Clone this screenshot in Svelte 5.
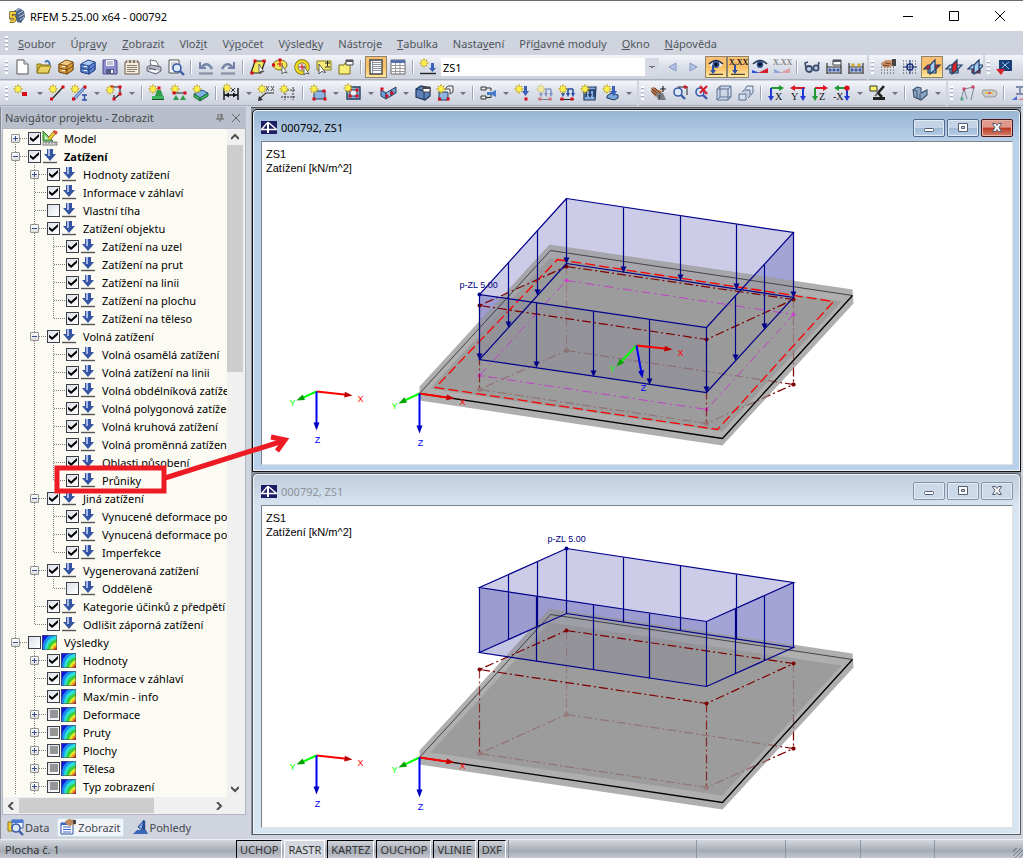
<script lang="ts">
  type Check = 'on' | 'off' | 'mixed'
  type Node = { depth: number; label: string; icon: string; check: Check; exp?: '+' | '-' }
  type Pt = [number, number]

  const menus: [string, string, string][] = [
    ['', 'S', 'oubor'], ['Úpr', 'a', 'vy'], ['', 'Z', 'obrazit'], ['Vlož', 'i', 't'],
    ['Vý', 'p', 'očet'], ['Výsled', 'k', 'y'], ['Nástro', 'j', 'e'], ['', 'T', 'abulka'],
    ['Nasta', 'v', 'ení'], ['Pří', 'd', 'avné moduly'], ['', 'O', 'kno'], ['', 'N', 'ápověda']
  ]

  // "|" separator, "v" drop-down arrow, "!" prefix for a pressed button
  const fileTools = 'new open box1 box2 save clip print preview | undo redo | para lasso ring pick folder | !list table | load'.split(' ')
  const viewTools = 'prev next !eyeload !xload eye xx | glasses rail1 rail2'.split(' ')
  const gridTools = ['hand', 'grid', '!plane1', 'plane2', 'plane3']
  const drawTools = 'node v line member v poly v | support line2 slab | dim v xxdim frame | rect v opening v fold v solid setbox v | joint v load1 load2 load3 load4 load5 v'.split(' ')
  const zoomTools = 'move zoomin zoomout cube cubes | axX axY axZ axMX v lamp v | view v'.split(' ')

  const navTabs = [
    { label: 'Data', icon: 'tabdata' },
    { label: 'Zobrazit', icon: 'tabview' },
    { label: 'Pohledy', icon: 'tabcam' }
  ]
  let activeTab = $state('Zobrazit')

  const statusModes = ['UCHOP', 'RASTR', 'KARTEZ', 'OUCHOP', 'VLINIE', 'DXF']
  let modes = $state(new Set(['RASTR']))

  function toggleMode(m: string) {
    const next = new Set(modes)
    if (next.has(m)) next.delete(m)
    else next.add(m)
    modes = next
  }

  const n = (depth: number, label: string, icon = 'arrow', check: Check = 'on', exp?: '+' | '-'): Node =>
    ({ depth, label, icon, check, exp })

  const tree: Node[] = [
    n(0, 'Model', 'model', 'on', '+'),
    n(0, 'Zatížení', 'arrow', 'on', '-'),
    n(1, 'Hodnoty zatížení', 'arrow', 'on', '+'),
    n(1, 'Informace v záhlaví'),
    n(1, 'Vlastní tíha', 'arrow', 'off'),
    n(1, 'Zatížení objektu', 'arrow', 'on', '-'),
    n(2, 'Zatížení na uzel'),
    n(2, 'Zatížení na prut'),
    n(2, 'Zatížení na linii'),
    n(2, 'Zatížení na plochu'),
    n(2, 'Zatížení na těleso'),
    n(1, 'Volná zatížení', 'arrow', 'on', '-'),
    n(2, 'Volná osamělá zatížení'),
    n(2, 'Volná zatížení na linii'),
    n(2, 'Volná obdélníková zatížení'),
    n(2, 'Volná polygonová zatížení'),
    n(2, 'Volná kruhová zatížení'),
    n(2, 'Volná proměnná zatížení'),
    n(2, 'Oblasti působení'),
    n(2, 'Průniky'),
    n(1, 'Jiná zatížení', 'arrow', 'on', '-'),
    n(2, 'Vynucené deformace podpor'),
    n(2, 'Vynucená deformace podpor'),
    n(2, 'Imperfekce'),
    n(1, 'Vygenerovaná zatížení', 'arrow', 'on', '-'),
    n(2, 'Odděleně', 'arrow', 'off'),
    n(1, 'Kategorie účinků z předpětí'),
    n(1, 'Odlišit záporná zatížení'),
    n(0, 'Výsledky', 'result', 'off', '-'),
    n(1, 'Hodnoty', 'result', 'on', '+'),
    n(1, 'Informace v záhlaví', 'result'),
    n(1, 'Max/min - info', 'result'),
    n(1, 'Deformace', 'result', 'mixed', '+'),
    n(1, 'Pruty', 'result', 'mixed', '+'),
    n(1, 'Plochy', 'result', 'mixed', '+'),
    n(1, 'Tělesa', 'result', 'mixed', '+'),
    n(1, 'Typ zobrazení', 'result', 'mixed', '+')
  ]

  // does the branch at this level go on below row i
  function goesOn(i: number, level: number) {
    for (let j = i + 1; j < tree.length; j++) {
      if (tree[j].depth === level) return true
      if (tree[j].depth < level) return false
    }
    return level < 2
  }

  const p = (d: string, stroke = '#333', w = 1, fill = 'none') =>
    `<path d="${d}" stroke="${stroke}" stroke-width="${w}" fill="${fill}"/>`
  const f = (d: string, fill: string) => `<path d="${d}" fill="${fill}"/>`
  const dot = (x: number, y: number, c = '#d80c18') => `<rect x="${x - 1.5}" y="${y - 1.5}" width="3" height="3" fill="${c}"/>`
  const star = (x = 4, y = 4) =>
    `<g transform="translate(${x} ${y})">` + p('M0-4.500V4.500M-4.500 0H4.500M-3-3L3 3M3-3L-3 3', '#c4ac28', 1.6) +
    p('M0-3V3M-3 0H3M-2-2L2 2M2-2L-2 2', '#fff24a', 1.2) + '</g>'
  const eyeShape = f('M1 6Q8-1 15 6Q8 12 1 6z', '#e8eef8') + p('M1 5Q8-2 15 5', '#23304f', 1.6) +
    '<circle cx="8" cy="5.5" r="3.4" fill="#2b4c8c"/><circle cx="8" cy="5.5" r="1.4" fill="#000"/>'
  const magn = (x: number, y: number) =>
    `<circle cx="${x}" cy="${y}" r="4" fill="#dbe8f8" stroke="#3c5ba9" stroke-width="1.6"/>` + p(`M${x + 3} ${y + 3}l4 4`, '#3c5ba9', 2.4)
  const down = (x: number, y: number) => f(`M${x - 1} ${y}h2v5h2l-3 4l-3-4h2z`, '#2b4fa8')
  const sup = f('M1 15h14v-1h-14z', '#222') + dot(3, 14) + dot(13, 14)
  const plane = (red: number) =>
    p('M4 7h8v7H4z', '#1f3d66', 1.2, red === 2 ? '#e02424' : '#8fc0ea') +
    p('M0 10L4 6H16L12 10z', '#1f3d66', 1.2, red === 0 ? '#e02424' : '#a7cdf0') +
    p('M6 6L11 1V11L6 15z', '#1f3d66', 1.2, red === 1 ? '#e02424' : '#a7cdf0')
  const axis = (letter: string, h: string, v: string, flip = false) =>
    p(flip ? 'M15 3H4' : 'M3 3H12', h, 2) + f(flip ? 'M5 0L0 3L5 6z' : 'M11 0l5 3l-5 3z', h) +
    p(flip ? 'M13 3V12' : 'M3 3V12', v, 2) + f(flip ? 'M10 11h6l-3 5z' : 'M0 11h6l-3 5z', v) +
    `<text x="${flip ? 1 : 7}" y="15" font-size="10" font-family="Liberation Serif" fill="#111">${letter}</text>`
  const xxText = (c: string) => `<text x="-1" y="6" font-size="8" font-weight="bold" font-family="Liberation Serif" fill="${c}">X.XX</text>`
  const cabinet = (a: string, b: string, c: string) =>
    p('M1 5L8 1L15 3V11L9 15L1 13z', c, 1, a) + p('M1 5L9 7V15L1 13z', c, 1, b) + p('M9 7l6-4v8l-6 4z', c, 1, b) +
    p('M1 9l8 2l6-4', c) + f('M4 7h3v1h-3zM4 11h3v1h-3z', '#fff')

  const icons: Record<string, string> = {
    new: p('M3 1h7l4 4v10H3z', '#555', 1, '#fff') + p('M10 1v4h4', '#777', 1, '#dde'),
    open: p('M1 14V5h4l1 1h7v8z', '#8a7616', 1, '#d8b93a') + p('M1 14l3-7h11l-3 7z', '#8a7616', 1, '#e8d264') + p('M9 3q4-3 5 3', '#3d6fa8', 1.8),
    box1: cabinet('#f4ca80', '#d99a3a', '#75501a'),
    box2: cabinet('#a9c6f4', '#5f86d0', '#27448a'),
    save: p('M1 1h13l1 1v13H1z', '#4d4d88', 1, '#8d8fd0') + f('M4 1h8v6H4z', '#f2f2fa') + f('M4 10h8v5H4z', '#555b88') + f('M9 11h2v3H9z', '#fff') + p('M5 3h6M5 5h6', '#99a'),
    clip: p('M1 3h14v12H1z', '#6b5d48', 1, '#f4ecdc') + f('M2 1h12v3H2z', '#8a7a60') + p('M4 1v3M8 1v3M12 1v3', '#eee', 1.4) + p('M3 6.500h10M3 8.500h10M3 10.500h10M3 12.500h8', '#8a8070'),
    print: p('M4 1l6 1l3 5H5z', '#777', 1, '#fff') + p('M1 8l4-2l10 2v4l-5 3l-9-3z', '#667', 1, '#b9bcc8') + f('M3 12l7 2l3-2l-7-2z', '#fff') + p('M3 9l7 2', '#446'),
    preview: p('M1 1h10v13H1z', '#555', 1, '#fff') + p('M3 4h6M3 6h6M3 8h4M3 10h3', '#99a') + magn(9, 9),
    undo: p('M2 3v6h6', '#7384a8', 2) + p('M3 9Q9 1 14 10', '#7384a8', 2.6) + p('M1 14.500h14', '#8d96a8', 2.4),
    redo: p('M14 3v6h-6', '#7384a8', 2) + p('M13 9Q7 1 2 10', '#7384a8', 2.6) + p('M1 14.500h14', '#8d96a8', 2.4),
    para: p('M5 2H15L11 14H1z', '#222', 1.2, '#f4e95a') + dot(5, 2) + dot(14, 2) + dot(2, 14) + p('M9 5v9l2-2l3 1z', '#444', 0.8, '#fff'),
    lasso: '<ellipse cx="8" cy="6" rx="7" ry="5" fill="#f4e95a" stroke="#7a6d12"/>' + p('M5 5h6M8 2v6', '#d80c18') + dot(8, 1) + dot(1.5, 6) + p('M10 6v9l2-2l3 1z', '#444', 0.8, '#fff'),
    ring: '<circle cx="8" cy="8" r="5.7" stroke="#6b5f0a" stroke-width="4" fill="none"/><circle cx="8" cy="8" r="5.7" stroke="#f0dc20" stroke-width="2.6" fill="none"/>' + p('M8 5v6M5 8h6', '#d80c18') + p('M10 7v9l2-2l3 1z', '#444', 0.8, '#fff'),
    pick: p('M1 2h14v9H1z', '#8a7d1a', 1, '#f7ee78') + p('M9 4h5M11.5 2v5M9 8h5', '#222') + p('M3 5v10l2.500-2.500l4 1z', '#333', 0.8, '#fff'),
    folder: p('M1 6h5l1-2h5v11H1z', '#7d7018', 1, '#f7ee78') + p('M8 1h7v5H8z', '#444', 1, '#fff') + f('M8 1h7v2H8z', '#556'),
    list: p('M2 1h12v14H2z', '#444', 1.4, '#fff') + p('M5 3.500h8M5 5.500h8M5 7.500h8M5 9.500h8M5 11.500h8M4.500 2v12', '#6a7488', 0.8),
    table: p('M1 1h14v14H1z', '#666', 1, '#fff') + f('M1 1h14v3H1z', '#5472b0') + p('M1 6.500h14M1 9.500h14M1 12.500h14M5.500 4v11M10 4v11', '#999'),
    load: star(4, 4) + f('M11 4h3v5h2l-3.500 4l-3.500-4h2z', '#3b60b8') + p('M0 14.500h16', '#222', 1.4),
    prev: p('M12 4L5 8L12 12z', '#8396c4', 1, '#b4c3e6'),
    next: p('M4 4L11 8L4 12z', '#8396c4', 1, '#b4c3e6'),
    eyeload: eyeShape + down(5, 6) + p('M1 15.300h14', '#222'),
    xload: xxText('#222') + down(5, 6) + p('M1 15.300h14', '#222'),
    eye: eyeShape + f('M0 14V11L8 14z', '#2b4fd8') + f('M6 14h10V9z', '#d02030'),
    xx: xxText('#888') + f('M0 14V10L8 14z', '#92a4de') + f('M6 14h10V9z', '#dda0a4'),
    glasses: '<circle cx="5" cy="10" r="3" fill="#c3d2e8" stroke="#3b4c70" stroke-width="1.800"/><circle cx="12" cy="9" r="2.6" fill="#c3d2e8" stroke="#3b4c70" stroke-width="1.800"/>' + p('M2 9L1 4L4 3M14 8l1-5', '#3b4c70', 1.6),
    rail1: p('M1 15V4M15 15V6M1 8h14M1 14h14', '#333', 1.2) + dot(4, 11, '#3858a8') + dot(8, 11, '#3858a8') + dot(12, 11, '#3858a8') + p('M7 1h8v5H7z', '#444', 1, '#fff') + f('M7 1h8v2H7z', '#556'),
    rail2: p('M1 15V4M15 15V4M1 8h14M1 14h14', '#333', 1.2) + dot(5, 6, '#c9a62a') + dot(11, 6, '#c9a62a') + dot(4, 11, '#3858a8') + dot(8, 11, '#3858a8') + dot(12, 11, '#3858a8'),
    hand: p('M1 5h15M1 8h15M1 11h15M1 14h15', '#444', 1.2).replace('/>', ' stroke-dasharray="1 2"/>') + f('M1 4L6 1L13 1V7L7 9L3 8z', '#c9926a') + p('M3 6l6 1M5 4l6 1', '#6b3f22') + f('M12 0h4v7h-4z', '#444'),
    grid: p('M1 2h15M1 5h15M1 8h15M1 11h15M1 14h15', '#444', 1).replace('/>', ' stroke-dasharray="1 2"/>') + '<circle cx="8" cy="8" r="3" fill="#e8ecf6" stroke="#1c2f7c" stroke-width="1.4"/>' + p('M8 1v14M1 8h14', '#1c2f7c'),
    plane1: plane(0), plane2: plane(1), plane3: plane(2),
    nn: f('M3 1h13v11H3z', '#1d3f78') + p('M6 3l3 3l4-3M6 9l3-3l4 4', '#8ecbf0') + f('M0 10h9l-4 6z', '#d8202a'),
    node: star(4, 4) + '<rect x="8" y="7" width="5" height="4" fill="#d80c18"/>',
    line: p('M3 14L14 2', '#222', 1.2) + dot(2.5, 14) + dot(14, 2) + star(4, 4),
    member: p('M3 14L14 2', '#3a62ad', 3) + p('M3 14L14 2', '#a9c6ee', 1.2) + dot(2.5, 14) + dot(14, 2) + star(4, 4) + p('M11 10h5M13.500 10v5M11 15h5', '#2b4fa8', 1.4),
    poly: p('M6 2H14V9L8 14V10', '#222', 1.2) + dot(6, 2) + dot(14, 2) + dot(14, 9) + dot(8, 14) + star(4, 5),
    support: star(4, 4) + dot(10, 3) + f('M8 5h4l2 6H6z', '#2f9c4c') + f('M3 11h12v3H3z', '#3fb45e') + p('M3 14.500h12', '#164f26', 1),
    line2: star(4, 4) + p('M3 8h12', '#222') + dot(3, 8) + dot(14, 8) + f('M2 15l3-5l3 5zM9 15l3-5l3 5z', '#2f9c4c'),
    slab: p('M1 9l8-4l6 3l-8 5z', '#2b4f80', 1, '#7db1e6') + p('M1 9v3l6 4v-3zM7 13v3l8-5V8z', '#1d6b38', 1, '#48b866') + star(4, 4),
    dim: p('M1 3v12M15 3v12M1 10h14', '#111', 1.4) + f('M2 10l4-2.500v5zM14 10l-4-2.500v5z', '#111') + p('M8 3l4 4M12 3l-4 4', '#333') + star(4, 3),
    xxdim: p('M1 14L8 8H16', '#333', 1.1) + f('M0 16l1-5l4 4z', '#333') + p('M8 1l3 5M11 1l-3 5M13 1l3 5M16 1l-3 5', '#444', 0.9) + star(4, 4),
    frame: p('M5 2v13M13 2v13M1 5h15M1 12h15', '#333', 1).replace('/>', ' stroke-dasharray="2 1"/>') + star(4, 4),
    rect: p('M4 6h11v8H4z', '#23405f', 1, '#8db4e0') + dot(15, 14) + dot(4, 14) + dot(14, 6) + star(4, 4),
    opening: p('M2 2h13v12H2z', '#23405f', 1.4, '#8db4e0') + p('M5 5h7v6H5z', '#23405f', 1, '#eef2f8') + dot(5, 5) + dot(12, 5) + dot(5, 11) + dot(12, 11) + star(3, 3),
    fold: p('M1 5l5 3v6l-5-3z', '#23405f', 1, '#6fa0d8') + p('M6 8l5-3v6l-5 3z', '#23405f', 1, '#9cc3ee') + p('M11 5l5-3v6l-5 3z', '#23405f', 1, '#6fa0d8') + dot(7, 11) + dot(12, 8) + dot(2, 4),
    solid: p('M1 4l5-3l9 2v8l-5 4l-9-3z', '#20355a', 1.2, '#5d83b8') + p('M1 4l8 2v9', '#20355a') + p('M8 2h7v5H8z', '#444', 1, '#fff') + f('M8 2h7v2H8z', '#445'),
    setbox: p('M2 7h9v8H2z', '#23405f', 1, '#8db4e0') + p('M8 4l3-3h5v6l-3 2M8 4h5v5', '#444', 1, '#f0f2f6') + dot(2.5, 14) + dot(11, 14) + star(4, 4),
    joint: p('M1 2h5v3H1zM1 11h5v3H1z', '#333', 1, '#e8eaf0') + p('M6 3h5v3M6 12.500h5v-3', '#333') + f('M7 7h5l4-2v7l-4-2H7z', '#4a7cc8'),
    load1: star(4, 4) + f('M9 1h3v5h2l-3.500 5L7 6h2z', '#3b60b8') + dot(11, 14),
    load2: `<g opacity=".5">${p('M4 4h10M4 4v5M9 4v5M14 4v5', '#2b4fa8', 1.6)}${f('M2 8h4l-2 4zM7 8h4l-2 4zM12 8h4l-2 4z', '#2b4fa8')}${sup}${star(4, 4)}</g>`,
    load3: p('M4 4h10M4 4v5M9 4v5M14 4v5', '#2b4fa8', 1.6) + f('M2 8h4l-2 4zM7 8h4l-2 4zM12 8h4l-2 4z', '#2b4fa8') + sup + star(4, 4),
    load4: p('M3 2h12l-1 13H3z', '#20355a', 1.2, '#86b2e4') + p('M3 5h11M5 5v7M9 5v6M13 5v7', '#20355a', 1.6) + f('M7 9h4l-2 4z', '#20355a') + star(4, 4),
    load5: p('M4 11l4-3l7 2v3l-4 2l-7-2z', '#20355a', 1, '#7ba6dc') + f('M9 1h3v5h2l-3.500 5L7 6h2z', '#3b60b8') + star(4, 4),
    move: f('M1 3l3-1l4 3l4 1l-1 4l-5 2l-4-4z', '#b57a55') + p('M2 4l6 5M5 3l5 5M1 6l5 4', '#5d3216') + p('M13 1v6M10 4h6', '#222', 1.2) + f('M6 8h7l3 7H8z', '#777b84') + p('M10 10l-1 4', '#333'),
    zoomin: magn(6, 7) + p('M6 2h9v8', '#222') + p('M13 0v4M11 2h5', '#d80c18', 1.2),
    zoomout: magn(6, 7) + p('M6 1l7 8M13 1L6 8', '#d82030', 2.2),
    cube: p('M1 4l3-3h11v11l-3 3H1z', '#5d708f', 1, '#ccd8e8') + p('M1 4h11v11M12 4l3-3M4 1v11h11M4 12l-3 3', '#5d708f'),
    cubes: p('M7 4l2-3h6v6l-2 3', '#5d708f', 1, '#dbe4f0') + p('M4 7l2-2h6v6l-2 2', '#5d708f', 1, '#c3d0e4') + p('M1 9h7v6H1z', '#5d708f', 1, '#d4deec'),
    axX: axis('X', '#1f9a34', '#2438d0'),
    axY: axis('Y', '#d81828', '#2438d0', true),
    axZ: axis('Z', '#d81828', '#1f9a34'),
    axMX: p('M14 3H4', '#1f9a34', 2) + f('M5 0L0 3L5 6z', '#1f9a34') + p('M13 3V12', '#2438d0', 2) + f('M10 11h6l-3 5z', '#2438d0') + '<circle cx="13" cy="3" r="2.600" fill="#d80c18"/><text x="-1" y="15" font-size="10" font-family="Liberation Serif" fill="#111">-X</text>',
    lamp: p('M1 1h7v5H1z', '#333', 1, '#fff766') + p('M15 1L9 8L13 12', '#222', 2.6) + f('M4 12h12v3H4z', '#222') + p('M9 8l-3 3', '#555', 1.4),
    view: p('M1 5l4-3l4 1v5l6-3v5l-6 5l-7-3z', '#3d5470', 1.1, '#8ba4c4') + p('M1 5l4 1v7M8 9v6', '#3d5470'),
    frameview: p('M2 15L5 4L15 2L12 15M5 4l3 10', '#7d8795') + dot(5, 4, '#c46') + dot(14, 2, '#c46') + dot(3, 14, '#5a8'),
    cylinder: p('M2 5h10q4 0 4 3.500t-4 3.500H4L1 8z', '#999', 1, '#ccc') + f('M4 7h8v2H4z', '#e8c84a') + f('M7 7h3v2H7z', '#d66'),
    ibeam: p('M5 2h8M9 2v7M5 9h8', '#7f8cae', 1.8) + f('M1 15l5-4v4z', '#4a68d8') + f('M6 15h8v-3z', '#dd8890'),
    arrow: f('M5 1h6v5h3L8 13L2 6h3z', '#3554a2') + f('M6 1h2v7H6z', '#a9bbe6') + p('M1 14.500h14', '#555', 1.4),
    model: p('M1 1v10h10z', '#2c7a2c', 1, '#7ad06c') + f('M3 6v3h3z', '#fff') + p('M7 9l6-7', '#8a6a10', 3.600) + p('M7 9l6-7', '#f6cf3c', 2.200) + f('M12 0l4 2l-2 3l-3-3z', '#d04848') + p('M1 12h14v3H1z', '#777', 1, '#eee') + p('M4 12v2M7 12v2M10 12v2M13 12v2', '#777'),
    result: f('M0 1h15v15H0z', '#1418d8') + f('M1 16Q0 5 8 1H15V16z', '#1c8cf0') + f('M3 16Q3 5 13 2H15V16z', '#2be0d8') + f('M5 16Q6 7 15 5V16z', '#3ad03c') + f('M8 16Q9 10 15 8V16z', '#e8e828') + f('M10 16Q11 12 15 11V16z', '#f09020') + f('M12 16q1-2 3-3V16z', '#e01818') + p('M.5 1.500h14v14H.5z', '#555', 0.6),
    tabdata: p('M1 3h5v9H1z', '#8a7616', 1, '#f2ce3c') + p('M5 1h11v8H5z', '#3b63b8', 1, '#fff') + f('M5 1h11v3H5z', '#4a7ad8') + magn(9, 9),
    tabview: p('M1 4h12v11H1z', '#2b4f9a', 1, '#fff') + f('M1 4h12v2H1z', '#3566c8') + p('M3 8h8M3 10.500h8M3 13h8', '#3566c8', 1.2) + f('M5 2l4-2l7 1v4L9 7L6 5z', '#c08a5e') + f('M13 1h3v4h-3z', '#444'),
    tabcam: p('M12 1L6 8l4 3z', '#24478e', 1, '#7fa4e0') + p('M12 2v9', '#24478e', 2.400) + f('M1 15l4-4h9l2 4z', '#3c66b8')
  }

  // load block corners: back left, back right, front right, front left
  const loadBody: Pt[] = [[567, 199], [794, 233], [707, 328], [480, 295]]
  const loadFlat: Pt[] = [[567, 185], [794, 219], [707, 258], [480, 224]]
  const zoneTop: Pt[] = [[567, 267], [794, 300], [707, 340], [480, 306]]
  const zoneLow: Pt[] = [[567, 351], [794, 385], [707, 424], [480, 390]]
  const cut: Pt[] = [[567, 281], [794, 315], [707, 410], [480, 376]]
  const loadHeight = 65

  const pts = (a: Pt[]) => a.map((q) => q.join(',')).join(' ')
  const lower = (a: Pt[]): Pt[] => a.map(([x, y]) => [x, y + loadHeight])
  const face = (a: Pt[], i: number): Pt[] => {
    const q = a[i]
    const r = a[(i + 1) % 4]
    return [q, r, [r[0], r[1] + loadHeight], [q[0], q[1] + loadHeight]]
  }

  function stems(a: Pt[]): Pt[] {
    return a.flatMap((q, i) => {
      const r = a[(i + 1) % 4]
      const parts = i % 2 ? 3 : 4
      return Array.from({ length: parts }, (_, k): Pt => [
        Math.round(q[0] + ((r[0] - q[0]) * k) / parts),
        Math.round(q[1] + ((r[1] - q[1]) * k) / parts)
      ])
    })
  }

  const views = [
    { id: 1, active: true, load: loadBody, arrows: true, label: [460, 288] },
    { id: 2, active: false, load: loadFlat, arrows: false, label: [548, 178] }
  ]
</script>

{#snippet icon(name: string)}
  <svg class="icon" viewBox="0 0 16 16" aria-hidden="true">{@html icons[name]}</svg>
{/snippet}

{#snippet tools(items: string[])}
  {#each items as item}
    {@const name = item.replace('!', '')}
    {#if item === '|'}
      <span class="sep"></span>
    {:else if item === 'v'}
      <button class="caret" aria-label="Další"></button>
    {:else}
      <button class="tool" class:pressed={item !== name} aria-label={name}>{@render icon(name)}</button>
    {/if}
  {/each}
{/snippet}

{#snippet axes(o: Pt, x: Pt, y: Pt, z: Pt)}
  {#each [['X', '#f00', '#c00000', x], ['Y', '#0f0', '#00a000', y], ['Z', '#00f', '#0000c0', z]] as [name, color, tip, end]}
    {@const angle = (Math.atan2(end[1] - o[1], end[0] - o[0]) * 180) / Math.PI}
    {@const len = Math.hypot(end[0] - o[0], end[1] - o[1])}
    <g transform="translate({o[0]} {o[1]}) rotate({angle})">
      <path d="M0 0H{len - 6}" stroke={color} stroke-width="2" />
      <path d="M{len} 0l-8 -3v6z" fill={tip} />
    </g>
    <text
      x={end[0] + (name === 'X' ? 8 : name === 'Y' ? -4 : 1)}
      y={end[1] + (name === 'X' ? 6 : name === 'Y' ? 5 : 12)}
      text-anchor="middle" fill={color}>{name}</text>
  {/each}
{/snippet}

{#snippet scene(view: (typeof views)[number])}
  <svg class="scene" role="img" aria-label="Model se zatížením ZS1">
    <g transform="translate(-262.5 -142.5)">
      {#each view.load as _, i}
        <polygon points={pts(face(view.load, i))} fill="#00008c" opacity="0.2" />
      {/each}
      <g class="zone">
        <polygon points={pts(zoneLow)} />
        <path d="M794 300V385" />
      </g>

      <polygon points="420,387 550,245 853,290 854,304 723,446 420,401" fill="#9b9b9b" opacity="0.8" />
      <polygon points="431,389 550,259 842,302 723,432" fill="#979797" opacity="0.8" />
      <path d="M420 394L551 251L853 296" stroke="#444" fill="none" />
      <path d="M853 296L723 439L420 394" stroke="#000" stroke-width="1.3" fill="none" />

      <g class="zone" opacity="0.2">
        <polygon points={pts(zoneLow)} />
        <path d="M567 267V351M794 300V385" />
        {#each zoneLow as [x, y]}<circle cx={x} cy={y} r="2.5" />{/each}
      </g>

      <polygon points={pts(face(view.load, 2))} fill="#00008c" opacity="0.04" />
      {#if view.arrows}
        <polygon points={pts(cut)} class="cut" />
        {#each cut as [x, y]}<circle cx={x} cy={y} r="2" fill="#d040d0" />{/each}
        <polygon points="558,260 834,302 718,430 436,388" class="limit" />
      {/if}

      <g class="zone">
        <polygon points={pts(zoneTop)} />
        <path d="M480 306V390M707 340V424" opacity="0.75" />
        {#each zoneTop as [x, y]}<circle cx={x} cy={y} r="2" />{/each}
        <circle cx="794" cy="385" r="2" />
      </g>

      <g class="load">
        <polygon points={pts(view.load)} />
        <polygon points={pts(lower(view.load))} />
        {#each stems(view.load) as [x, y]}
          <path d="M{x} {y}v{loadHeight}" />
          {#if view.arrows}
            <path d="M{x - 3} {y + loadHeight - 6}h6l-3 6z" class="head" />
          {/if}
        {/each}
        {#if view.arrows}
          <circle cx="480" cy="295" r="2" />
        {:else}
          <circle cx="567" cy="185" r="2" />
        {/if}
      </g>
      <text x={view.label[0]} y={view.label[1]} class="value">p-ZL 5.00</text>

      {@render axes([317, 392], [353, 396], [297, 401], [317, 431])}
      {@render axes([420, 394], [455, 399], [399, 404], [420, 434])}
      {#if view.arrows}
        {@render axes([637, 346], [673, 350], [617, 367], [643, 379])}
      {/if}
    </g>
  </svg>
{/snippet}

<div class="app">
  <header class="titlebar">
    <svg class="logo" viewBox="0 0 16 16" aria-hidden="true">
      <path d="M5 3l5-3l5 3l1 6l-4 6l-4-1z" fill="#4c6488" />
      <path d="M7 3l4-2M9 6l5-3M10 9l5-3M11 12l4-3" stroke="#b9cbe2" />
      <path d="M7 5H2v4q4-1 4 2t-5 2" stroke="#5f4c10" stroke-width="3.4" fill="none" />
      <path d="M7 5H2v4q4-1 4 2t-5 2" stroke="#f2cb38" stroke-width="2" fill="none" />
    </svg>
    <h1>RFEM 5.25.00 x64 - 000792</h1>
    <div class="sysbuttons">
      <button aria-label="Minimalizovat"><svg viewBox="0 0 10 10"><path d="M0 5.500h10" /></svg></button>
      <button aria-label="Maximalizovat"><svg viewBox="0 0 10 10"><path d="M.5.5h9v9h-9z" /></svg></button>
      <button aria-label="Zavřít"><svg viewBox="0 0 10 10"><path d="M0 0l10 10M10 0L0 10" /></svg></button>
    </div>
  </header>

  <nav class="menubar">
    <span class="grip"></span>
    {#each menus as [before, key, after]}
      <button>{before}<u>{key}</u>{after}</button>
    {/each}
  </nav>

  <div class="toolrow">
    <div class="toolbar grow">
      <span class="grip"></span>
      {@render tools(fileTools)}
      <select class="case" aria-label="Zatěžovací stav"><option>ZS1</option></select>
      {@render tools(viewTools)}
    </div>
    <div class="toolbar snap"><span class="grip"></span>{@render tools(gridTools)}</div>
    <div class="toolbar last"><span class="grip"></span>{@render tools(['nn'])}</div>
  </div>
  <div class="toolrow">
    <div class="toolbar pad"><span class="grip"></span>{@render tools(drawTools)}</div>
    <div class="toolbar pad"><span class="grip"></span>{@render tools(zoomTools)}</div>
    <div class="toolbar rest"><span class="grip"></span>{@render tools(['frameview', 'cylinder', '|', 'ibeam'])}</div>
  </div>

  <div class="main">
    <aside class="navigator">
      <div class="nav-head">
        <h2>Navigátor projektu - Zobrazit</h2>
        <button aria-label="Připnout"><svg viewBox="0 0 8 8"><path d="M2 0h4M2 0v5M6 0v5M5 0v5M0 5h8M4 5v3" /></svg></button>
        <button aria-label="Zavřít"><svg viewBox="0 0 8 8"><path d="M0 0l8 8M8 0L0 8" /></svg></button>
      </div>
      <div class="nav-body">
        <ul class="tree">
          {#each tree as node, i}
            <li class="row">
              {#each { length: node.depth } as _, level}
                <span class="guide" class:up={goesOn(i, level)} class:down={goesOn(i, level)}></span>
              {/each}
              <span class="guide own" class:up={i > 0} class:down={goesOn(i, node.depth)}>
                {#if node.exp}
                  <button class="expander" class:plus={node.exp === '+'} aria-label={node.exp === '+' ? 'Rozbalit' : 'Sbalit'}></button>
                {/if}
              </span>
              <label class:bold={node.label === 'Zatížení'}>
                <input type="checkbox" checked={node.check === 'on'} indeterminate={node.check === 'mixed'} />
                {@render icon(node.icon)}
                <span>{node.label}</span>
              </label>
            </li>
          {/each}
        </ul>
        <div class="vscroll">
          <button class="chev" aria-label="Nahoru"><svg viewBox="0 0 8 8"><path d="M0 6l4-4l4 4" /></svg></button>
          <span class="thumb"></span>
          <button class="chev" aria-label="Dolů"><svg viewBox="0 0 8 8"><path d="M0 2l4 4l4-4" /></svg></button>
        </div>
      </div>
      <div class="hscroll">
        <button class="chev" aria-label="Vlevo"><svg viewBox="0 0 8 8"><path d="M6 0L2 4l4 4" /></svg></button>
        <span class="thumb"></span>
        <button class="chev" aria-label="Vpravo"><svg viewBox="0 0 8 8"><path d="M2 0l4 4l-4 4" /></svg></button>
      </div>
      <div class="nav-tabs">
        {#each navTabs as tab}
          <button class:active={activeTab === tab.label} onclick={() => (activeTab = tab.label)}>
            {@render icon(tab.icon)}{tab.label}
          </button>
        {/each}
      </div>
    </aside>

    <div class="mdi">
      {#each views as view (view.id)}
        <section class="window" class:active={view.active}>
          <div class="window-head">
            <svg class="bridge" viewBox="0 0 16 13" aria-hidden="true">
              <rect width="16" height="13" fill="#1d1d66" />
              <path d="M0 8.500h16M1 8L6 2M8 2L15 8" stroke="#fff" stroke-width="1.4" fill="none" />
              <path d="M7 1v11" stroke="#fff" stroke-width="2" />
            </svg>
            <h3>000792, ZS1</h3>
            <button aria-label="Minimalizovat"><svg viewBox="0 0 12 10"><rect x="1.5" y="5.5" width="9" height="3" rx="1" /></svg></button>
            <button aria-label="Obnovit"><svg viewBox="0 0 12 10"><path fill-rule="evenodd" d="M1.500.5h9v8h-9zM4.500 3.500v2h3v-2z" /></svg></button>
            <button class="close" aria-label="Zavřít"><svg viewBox="0 0 12 10"><path d="M1.500.5h3L6 2.500L7.500.5h3L8 4.500L10.500 8.500h-3L6 6.500L4.500 8.500h-3L4 4.500z" /></svg></button>
          </div>
          <div class="canvas">
            <p>ZS1<br />Zatížení [kN/m^2]</p>
            {@render scene(view)}
          </div>
        </section>
      {/each}
    </div>
  </div>

  <footer class="status">
    <span class="hint">Plocha č. 1</span>
    {#each statusModes as m}
      <button class:on={modes.has(m)} onclick={() => toggleMode(m)}>{m}</button>
    {/each}
    <span class="cell a"></span>
    <span class="cell b"></span>
    <span class="cell"></span>
    <span class="cell"></span>
    <span class="cell last"></span>
  </footer>

  <svg class="callout" width="300" height="80" viewBox="0 0 300 80" aria-hidden="true">
    <rect x="57" y="39" width="107" height="23" />
    <path d="M165 49L283 12" />
    <path d="M271 8L285 11L277 22" />
  </svg>
</div>

<style>
  :global(body) {
    margin: 0;
    overflow: hidden;
  }

  .app {
    position: relative;
    display: flex;
    flex-direction: column;
    height: 100vh;
    box-sizing: border-box;
    border-top: 1px solid #6b6b6b;
    background: #cfd4de;
    font-family: 'Noto Sans', 'Open Sans', sans-serif;
    font-size: 11px;
    color: #000;
    overflow: hidden;
  }

  button {
    display: flex;
    align-items: center;
    justify-content: center;
    flex-shrink: 0;
    padding: 0;
    border: 0;
    background: none;
    font: inherit;
    color: inherit;
  }

  h1, h2, h3, p, ul {
    margin: 0;
    padding: 0;
    font-size: inherit;
    font-weight: normal;
  }

  .icon {
    width: 16px;
    height: 16px;
    flex-shrink: 0;
    overflow: visible;
  }

  .titlebar {
    display: flex;
    align-items: center;
    height: 30px;
    flex-shrink: 0;
    padding-left: 9px;
    background: #fff;
  }

  .titlebar h1 {
    flex: 1;
    padding-left: 5px;
  }

  .logo {
    width: 16px;
    height: 16px;
  }

  .sysbuttons {
    display: flex;
  }

  .sysbuttons button {
    width: 46px;
    height: 28px;
  }

  .sysbuttons svg {
    width: 10px;
    height: 10px;
    stroke: #000;
    fill: none;
  }

  .menubar {
    display: flex;
    align-items: center;
    height: 24px;
    flex-shrink: 0;
    color: #50545c;
  }

  .menubar button {
    padding: 0 8px 0 7px;
  }

  .grip {
    width: 3px;
    height: 14px;
    margin: 0 3px 0 5px;
    flex-shrink: 0;
    background: repeating-linear-gradient(#fff 0 2px, #a9afbc 2px 3px, transparent 3px 4px);
  }

  .toolrow {
    display: flex;
    height: 26px;
    flex-shrink: 0;
    gap: 2px;
  }

  .toolbar {
    display: flex;
    align-items: center;
    flex-shrink: 0;
    height: 25px;
    background: linear-gradient(#f3f5f9, #dadee8 50%, #cdd2de);
    border-bottom: 1px solid #a7adb9;
    box-sizing: border-box;
  }

  .toolbar + .toolbar .grip {
    margin-left: 2px;
  }

  .toolbar.pad {
    padding-right: 2px;
  }

  .toolbar.grow {
    flex: 1;
  }

  .toolbar.snap {
    width: 114px;
    overflow: hidden;
  }

  .toolbar.last {
    width: 38px;
    overflow: hidden;
  }

  .toolbar.rest {
    flex: 1;
    overflow: hidden;
  }

  .tool {
    width: 22px;
    height: 22px;
    box-sizing: border-box;
  }

  .tool.pressed {
    border: 1px solid #8f8468;
    background: linear-gradient(#f8c078, #fbbf62 50%, #fde9a0);
  }

  .sep {
    width: 1px;
    height: 14px;
    margin: 0 3px;
    flex-shrink: 0;
    background: #a0a6b4;
    border-right: 1px solid #fff;
  }

  .caret {
    width: 13px;
    height: 22px;
  }

  .caret::before {
    content: '';
    border: 3px solid transparent;
    border-top-color: #6e737c;
    border-bottom: 0;
  }

  .case {
    flex: 1;
    min-width: 80px;
    height: 18px;
    margin: 0 2px;
    padding: 0 2px;
    border: 0;
    border-radius: 0;
    appearance: none;
    background:
      linear-gradient(to bottom right, #777 50%, transparent 50%) right 4px center / 3px 3px no-repeat,
      linear-gradient(to bottom left, #777 50%, transparent 50%) right 7px center / 3px 3px no-repeat,
      linear-gradient(#d6dae4, #d6dae4) right / 14px 100% no-repeat,
      #fff;
    font: inherit;
    color: #000;
  }

  .main {
    display: flex;
    flex: 1;
    min-height: 0;
  }

  .navigator {
    display: flex;
    flex-direction: column;
    width: 246px;
    flex-shrink: 0;
    padding-left: 1px;
    border-left: 1px solid #8a8d94;
    box-sizing: border-box;
  }

  .nav-head {
    display: flex;
    align-items: center;
    gap: 8px;
    height: 21px;
    flex-shrink: 0;
    padding: 0 6px 0 3px;
    background: #b9bfca;
    color: #45484e;
  }

  .nav-head h2 {
    flex: 1;
  }

  .nav-head svg {
    width: 8px;
    height: 8px;
    stroke: #666;
    fill: none;
  }

  .nav-body {
    display: flex;
    flex: 1;
    min-height: 0;
    padding: 0 2px 0 0;
    background: #f0f0f0;
    border: 1px solid #b2b7c2;
    border-bottom: 0;
  }

  .tree {
    flex: 1;
    min-width: 0;
    overflow: hidden;
    background: #fcfbf3;
    list-style: none;
    padding-left: 3px;
  }

  .row {
    display: flex;
    height: 18px;
    white-space: nowrap;
  }

  .guide {
    position: relative;
    width: 19px;
    flex-shrink: 0;
    display: flex;
    align-items: center;
    justify-content: center;
  }

  .guide.up {
    background: repeating-linear-gradient(#808080 0 1px, transparent 1px 2px) 9px 0 / 1px 50% no-repeat;
  }

  .guide.up.down {
    background-size: 1px 100%;
  }

  .guide.down:not(.up) {
    background: repeating-linear-gradient(#808080 0 1px, transparent 1px 2px) 9px 100% / 1px 50% no-repeat;
  }

  .guide.own::after {
    content: '';
    position: absolute;
    left: 10px;
    right: -2px;
    top: 9px;
    height: 1px;
    background: repeating-linear-gradient(to right, #808080 0 1px, transparent 1px 2px);
  }

  .expander {
    position: relative;
    z-index: 1;
    width: 9px;
    height: 9px;
    box-sizing: border-box;
    border: 1px solid #919191;
    border-radius: 1px;
    background:
      linear-gradient(#3a4f93, #3a4f93) center / 5px 1px no-repeat,
      linear-gradient(#fff, #ddd);
  }

  .expander.plus {
    background:
      linear-gradient(#3a4f93, #3a4f93) center / 5px 1px no-repeat,
      linear-gradient(#3a4f93, #3a4f93) center / 1px 5px no-repeat,
      linear-gradient(#fff, #ddd);
  }

  .row label {
    display: flex;
    align-items: center;
    padding-left: 3px;
  }

  .row label .icon {
    margin: 0 6px 0 1px;
  }

  .row label.bold {
    font-weight: bold;
  }

  .row input {
    display: grid;
    place-items: center;
    appearance: none;
    width: 13px;
    height: 13px;
    margin: 0;
    flex-shrink: 0;
    border: 1px solid #3c4048;
    background: linear-gradient(135deg, #dce0e8, #fff);
  }

  .row input:checked::before {
    content: '';
    width: 9px;
    height: 9px;
    background: #000;
    clip-path: polygon(0 35%, 35% 65%, 100% 5%, 100% 35%, 35% 95%, 0 65%);
  }

  .row input:indeterminate::before {
    content: '';
    width: 8px;
    height: 8px;
    background: #959595;
  }

  .vscroll {
    display: flex;
    flex-direction: column;
    width: 16px;
    flex-shrink: 0;
    background: #f0f0f0;
  }

  .chev {
    width: 16px;
    height: 16px;
  }

  .chev svg {
    width: 8px;
    height: 8px;
    fill: none;
    stroke: #505050;
    stroke-width: 2;
  }

  .thumb {
    background: #cdcdcd;
  }

  .vscroll .thumb {
    height: 34%;
    margin-bottom: auto;
  }

  .hscroll {
    display: flex;
    align-items: center;
    height: 17px;
    flex-shrink: 0;
    padding-right: 18px;
    background: #f0f0f0;
    border: 1px solid #b2b7c2;
    border-top: 0;
  }

  .hscroll .thumb {
    width: 135px;
    height: 15px;
    margin-right: auto;
  }

  .nav-tabs {
    display: flex;
    align-items: center;
    gap: 5px;
    height: 24px;
    flex-shrink: 0;
    padding-left: 2px;
    color: #45484e;
  }

  .nav-tabs button {
    gap: 2px;
    height: 19px;
    padding: 0 2px;
    border: 1px solid transparent;
  }

  .nav-tabs button.active {
    background: #f1f4f8;
    border-color: #c9e4ea;
    border-radius: 2px;
  }

  .mdi {
    display: flex;
    flex-direction: column;
    flex: 1;
    min-width: 0;
    gap: 1px;
    margin: 0 2px 4px 5px;
    padding: 1px 0 0 1px;
    background: #8c929c;
    border-top: 1px solid #555;
  }

  .window {
    display: flex;
    flex-direction: column;
    flex: 1;
    min-height: 0;
    padding: 0 7px 6px 8px;
    background: linear-gradient(#bfcddc, #d7e4f2 32px);
    border: 1px solid #565a60;
    border-radius: 5px 5px 0 0;
    box-shadow: inset 0 0 0 1px #eef4fa;
  }

  .window.active {
    background: linear-gradient(#98b4d2, #b9d1ea 32px);
    border-color: #111;
  }

  .window-head {
    display: flex;
    align-items: center;
    gap: 2px;
    height: 31px;
    flex-shrink: 0;
    padding-top: 4px;
    box-sizing: border-box;
    color: #8c9298;
  }

  .active .window-head {
    color: #000;
  }

  .window-head h3 {
    flex: 1;
    padding-left: 2px;
  }

  .bridge {
    width: 16px;
    height: 13px;
  }

  .window-head button {
    width: 32px;
    height: 18px;
    box-sizing: border-box;
    border: 1px solid #8393aa;
    border-radius: 2px;
    background: #ccd9e8;
    box-shadow: inset 0 0 0 1px #e3ecf5;
  }

  .window-head button svg {
    width: 12px;
    height: 10px;
    fill: #fff;
    stroke: #545c70;
  }

  .active .window-head button {
    border-color: #56698a;
    background: linear-gradient(#c3d4e8 50%, #9fb8d4 50%, #b8cfe8);
  }

  .active .window-head .close {
    border-color: #4a1418;
    background: linear-gradient(#e0988c 45%, #b83824 50%, #d88068);
    box-shadow: inset 0 0 0 1px #e8b4aa;
  }

  .canvas {
    position: relative;
    flex: 1;
    min-height: 0;
    background: #fff;
    border: 1px solid #7d8086;
    border-right-color: #e3e3e3;
    border-bottom-color: #e3e3e3;
    overflow: hidden;
  }

  .canvas p {
    position: absolute;
    left: 4px;
    top: 5px;
    font-family: 'Liberation Sans', sans-serif;
    line-height: 14px;
  }

  .scene {
    display: block;
    width: 100%;
    height: 100%;
  }

  .scene text {
    font-family: 'Liberation Sans', sans-serif;
    font-size: 9px;
  }

  .value {
    fill: #000080;
  }

  .zone polygon,
  .zone path {
    fill: none;
    stroke: #7f0000;
    stroke-width: 1.2;
    stroke-dasharray: 9 3 2 3;
  }

  .zone circle {
    fill: #7f0000;
  }

  .cut {
    fill: none;
    stroke: #c040c8;
    stroke-dasharray: 9 4 2 4;
  }

  .limit {
    fill: none;
    stroke: #f00;
    stroke-width: 1.3;
    stroke-dasharray: 10 4;
  }

  .load polygon,
  .load path {
    fill: none;
    stroke: #00008b;
    stroke-width: 1.2;
  }

  .load path.head,
  .load circle {
    fill: #00008b;
    stroke: none;
  }

  .status {
    display: flex;
    align-items: center;
    gap: 2px;
    height: 18px;
    flex-shrink: 0;
    border-top: 1px solid #eceef2;
    background: linear-gradient(#d5d8de, #a4aab4 60%, #c4c9d0);
    color: #333;
    white-space: nowrap;
  }

  .hint {
    width: 229px;
    padding-left: 5px;
    flex-shrink: 0;
  }

  .status button {
    height: 18px;
    padding: 0 3px;
    border: 1px solid #fff;
    border-left-color: #000;
    border-top-color: #000;
    border-bottom: 0;
  }

  .status button.on {
    background: #d4d8de;
    border-color: #fff;
  }

  .cell {
    flex: 71;
    height: 18px;
    border-left: 1px solid #8e949e;
  }

  .cell.a {
    flex: 185;
  }

  .cell.b {
    flex: 86;
  }

  .cell.last {
    flex: 88;
    background: repeating-linear-gradient(135deg, transparent 0 2px, #7d828b 2px 3px) right bottom / 10px 10px no-repeat;
  }

  .callout {
    position: absolute;
    left: 0;
    top: 428px;
    pointer-events: none;
    fill: none;
    stroke: #ed1c24;
    stroke-width: 5;
  }
</style>
